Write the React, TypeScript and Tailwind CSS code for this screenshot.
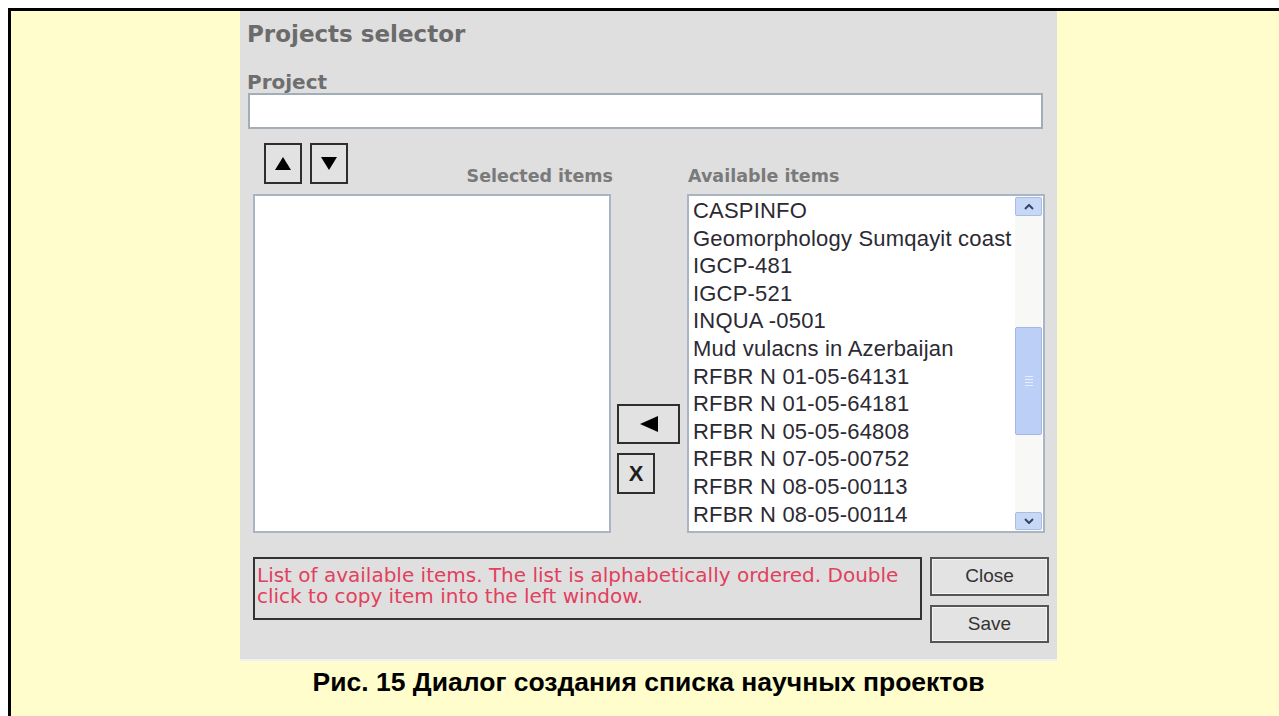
const available = [
  'CASPINFO',
  'Geomorphology Sumqayit coast',
  'IGCP-481',
  'IGCP-521',
  'INQUA -0501',
  'Mud vulacns in Azerbaijan',
  'RFBR N 01-05-64131',
  'RFBR N 01-05-64181',
  'RFBR N 05-05-64808',
  'RFBR N 07-05-00752',
  'RFBR N 08-05-00113',
  'RFBR N 08-05-00114',
];

const verdana = "font-['DejaVu_Sans',Verdana,sans-serif]";
const arial = "font-['Liberation_Sans',Arial,sans-serif]";

export default function App() {
  return (
    <div className="w-[1279px] h-[716px] overflow-hidden bg-white pl-2 pt-2">
      <div className="h-full border-l-[3px] border-t-[3px] border-black bg-[#fffdcc]">
        <div className="ml-[229px] w-[817px]">
          <SelectorDialog />
          <p className={`${arial} mt-[6px] text-center text-[26.5px] leading-[30px] font-bold text-black`}>
            Рис. 15 Диалог создания списка научных проектов
          </p>
        </div>
      </div>
    </div>
  );
}

function SelectorDialog() {
  return (
    <div className={`${verdana} h-[650px] bg-[#dfdfdf] border-b-2 border-[#edf2f8] pt-[10px] pl-[7px]`}>
      <h1 className="text-[23px] leading-[26px] font-bold text-[#6b6b6b]">Projects selector</h1>
      <label className="block mt-[25px] text-[20px] leading-[21px] font-bold text-[#6e6e6e]">Project</label>
      <div className="ml-px w-[795px] h-[36px] bg-white border-2 border-[#a3adb8]" />

      {/* ordering buttons + column headings */}
      <div className="mt-[14px] ml-[6px] flex h-[51px]">
        <div className="w-[358px] flex justify-between">
          <div className="flex gap-2 ml-[11px] items-start">
            <SquareButton>
              <svg width="16" height="13" viewBox="0 0 16 13"><path d="M8 0 L16 13 L0 13 Z" fill="#000" /></svg>
            </SquareButton>
            <SquareButton>
              <svg width="16" height="13" viewBox="0 0 16 13"><path d="M0 0 L16 0 L8 13 Z" fill="#000" /></svg>
            </SquareButton>
          </div>
          <span className="self-end pb-2 text-[17.5px] leading-[20px] font-bold text-[#7a7a7a] mr-[-2px]">Selected items</span>
        </div>
        <div className="w-[76px]" />
        <span className="self-end pb-2 ml-px text-[17.5px] leading-[20px] font-bold text-[#7a7a7a]">Available items</span>
      </div>

      {/* lists */}
      <div className="ml-[6px] flex h-[339px]">
        <div className="w-[358px] bg-white border-2 border-[#a9b5c3]" />
        <div className="w-[76px] flex flex-col items-start pl-[6px] pt-[210px] gap-[9px]">
          <button className="w-[63px] h-[40px] border-2 border-[#2e2e2e] bg-[#e2e2e2] flex items-center justify-center pl-px">
            <svg width="18" height="16" viewBox="0 0 18 16"><path d="M0 8 L18 0 L18 16 Z" fill="#000" /></svg>
          </button>
          <button className={`${arial} w-[38px] h-[41px] border-2 border-[#2e2e2e] bg-[#e2e2e2] text-[22px] font-bold text-[#1e1e1e] leading-none`}>
            X
          </button>
        </div>
        <div className="w-[358px] bg-white border-2 border-[#a9b5c3] flex">
          <ul className={`${arial} flex-1 overflow-hidden whitespace-nowrap pt-px pl-1 text-[22px] leading-[27.6px] tracking-[0.2px] text-[#2b2a33]`}>
            {available.map((name) => (
              <li key={name}>{name}</li>
            ))}
          </ul>
          <ScrollBar />
        </div>
      </div>

      {/* status line and actions */}
      <div className="mt-[24px] ml-[6px] flex gap-2">
        <div className="w-[669px] h-[63px] border-2 border-[#333] pt-[6px] pl-[2px] text-[20px] leading-[21px] text-[#e2405c]">
          List of available items. The list is alphabetically ordered. Double click to copy item into the left window.
        </div>
        <div className="flex flex-col gap-[9px]">
          <ActionButton label="Close" height="h-[39px]" />
          <ActionButton label="Save" height="h-[38px]" />
        </div>
      </div>
    </div>
  );
}

function SquareButton({ children }: { children: React.ReactNode }) {
  return (
    <button className="w-[38px] h-[41px] border-2 border-[#2e2e2e] bg-[#e2e2e2] flex items-center justify-center">
      {children}
    </button>
  );
}

function ActionButton({ label, height }: { label: string; height: string }) {
  return (
    <button className={`${arial} w-[119px] ${height} border-2 border-[#555] bg-[#e3e3e3] text-[19px] text-[#333] shadow-[inset_0_0_0_1px_#f4f4f4]`}>
      {label}
    </button>
  );
}

function ScrollBar() {
  return (
    <div className="w-[27px] mr-px flex flex-col bg-[#f8f8f6] py-px">
      <div className="h-[19px] bg-[#c7d7f6] border border-[#a9bde4] rounded-[2px] flex items-center justify-center">
        <svg width="10" height="6" viewBox="0 0 10 6"><path d="M1 5 L5 1 L9 5" stroke="#33446a" strokeWidth="2" fill="none" /></svg>
      </div>
      <div className="h-[111px]" />
      <div className="h-[108px] bg-[#bccff6] border border-[#a3b7e2] rounded-[2px] flex flex-col items-center justify-center gap-[2px]">
        <span className="w-[8px] h-px bg-[#e6eefc]" />
        <span className="w-[8px] h-px bg-[#e6eefc]" />
        <span className="w-[8px] h-px bg-[#e6eefc]" />
        <span className="w-[8px] h-px bg-[#e6eefc]" />
      </div>
      <div className="flex-1" />
      <div className="h-[18px] bg-[#c7d7f6] border border-[#a9bde4] rounded-[2px] flex items-center justify-center">
        <svg width="10" height="6" viewBox="0 0 10 6"><path d="M1 1 L5 5 L9 1" stroke="#33446a" strokeWidth="2" fill="none" /></svg>
      </div>
    </div>
  );
}
